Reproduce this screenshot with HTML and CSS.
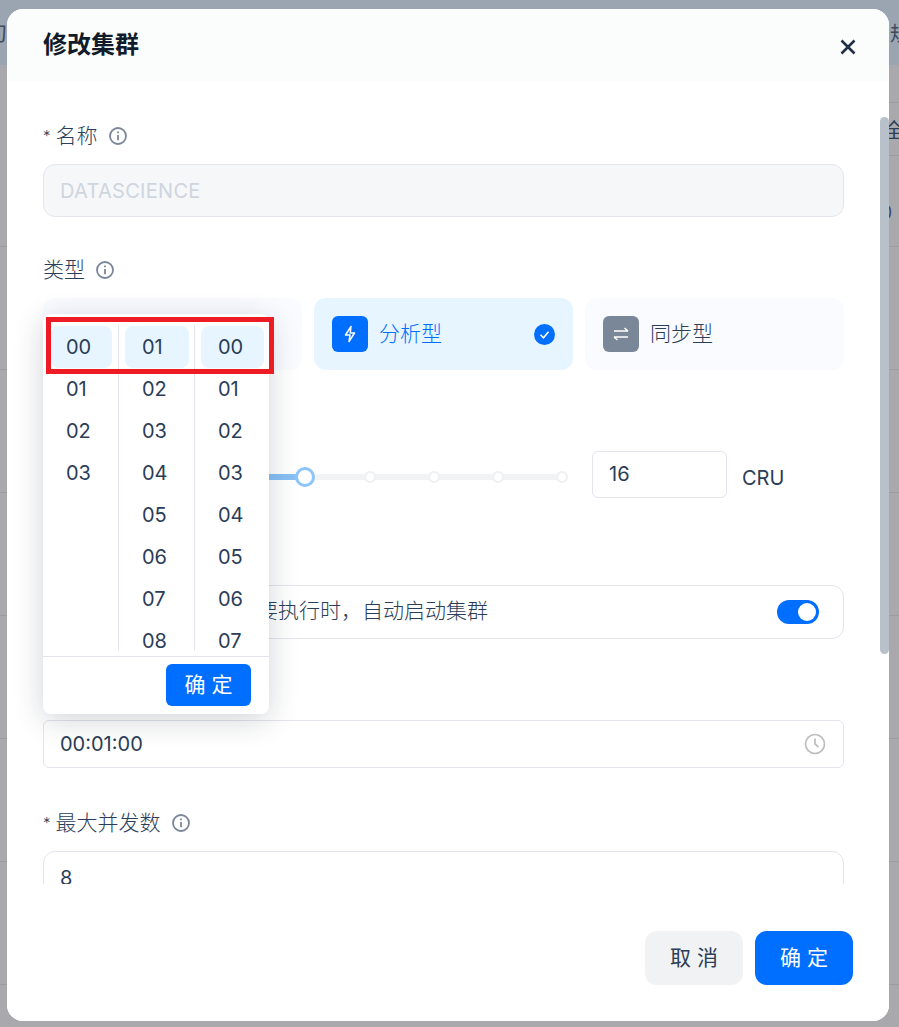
FILE: index.html
```html
<!DOCTYPE html>
<html lang="zh">
<head>
<meta charset="utf-8">
<title>修改集群</title>
<link rel="stylesheet" href="styles.css">
</head>
<body>
<div class="page">
  <div class="backdrop">
    <div class="bd-head"><span class="bd-l">刀</span><span class="bd-r">规</span></div>
    <div class="bd-sub"></div>
    <div class="bd-sub bd-sub2"><span class="bd-r bd-r2">全</span></div>
    <div class="bd-row bd-row-first"><span class="bd-num">0</span></div>
    <div class="bd-row"></div>
    <div class="bd-row"></div>
    <div class="bd-row"></div>
    <div class="bd-row"></div>
    <div class="bd-row"></div>
    <div class="bd-row"></div>
    <div class="bd-row"></div>
  </div>

  <div class="modal">
    <header class="modal-head">
      <h2 class="modal-title">修改集群</h2>
      <svg class="close" viewBox="0 0 16 16" width="16" height="16"><path d="M1.5 1.5l13 13M14.5 1.5l-13 13"/></svg>
    </header>

    <div class="modal-body">
      <div class="field">
        <div class="label"><span class="req">*</span>名称
          <svg class="info" viewBox="0 0 18 18" width="18" height="18"><circle cx="9" cy="9" r="8"/><path d="M9 8v5.2M9 4.6v1.6"/></svg>
        </div>
        <div class="input input-disabled">DATASCIENCE</div>
      </div>

      <div class="field">
        <div class="label">类型
          <svg class="info" viewBox="0 0 18 18" width="18" height="18"><circle cx="9" cy="9" r="8"/><path d="M9 8v5.2M9 4.6v1.6"/></svg>
        </div>
        <div class="cards">
          <div class="card"></div>
          <div class="card card-active">
            <span class="card-icon icon-blue">
              <svg viewBox="0 0 16 18" width="16" height="18"><path d="M9 1.5 3.5 10H8l-1 6.5L12.5 8H8.2z"/></svg>
            </span>
            <span class="card-name">分析型</span>
            <svg class="card-check" viewBox="0 0 21 21" width="21" height="21"><circle cx="10.5" cy="10.5" r="10.5"/><path d="M6.5 10.8l3 3 5-6"/></svg>
          </div>
          <div class="card">
            <span class="card-icon icon-gray">
              <svg viewBox="0 0 18 16" width="18" height="16"><path d="M2 5h14M12.5 2 16 5M16 11H2M5.5 14 2 11"/></svg>
            </span>
            <span class="card-name">同步型</span>
          </div>
        </div>
      </div>

      <div class="field">
        <div class="label"></div>
        <div class="spec-row">
          <div class="slider">
            <div class="track"></div>
            <div class="fill"></div>
            <span class="dot dot-a"></span>
            <span class="dot dot-b"></span>
            <span class="dot dot-c"></span>
            <span class="dot dot-d"></span>
            <span class="thumb"></span>
          </div>
          <div class="input num-input">16</div>
          <span class="unit">CRU</span>
        </div>
      </div>

      <div class="field">
        <div class="label"></div>
        <div class="switch-box">
          <span class="switch-text">当集群停止有任务需要执行时，自动启动集群</span>
          <span class="switch"><span class="knob"></span></span>
        </div>
      </div>

      <div class="field field-time">
        <div class="label"></div>
        <div class="input time-input">
          <span>00:01:00</span>
          <svg class="clock" viewBox="0 0 22 22" width="22" height="22"><circle cx="11" cy="11" r="9.5"/><path d="M11 5.5V11l3.5 3"/></svg>
        </div>
      </div>

      <div class="field">
        <div class="label"><span class="req">*</span>最大并发数
          <svg class="info" viewBox="0 0 18 18" width="18" height="18"><circle cx="9" cy="9" r="8"/><path d="M9 8v5.2M9 4.6v1.6"/></svg>
        </div>
        <div class="input">8</div>
      </div>
    </div>

    <footer class="modal-foot">
      <button class="btn btn-cancel">取 消</button>
      <button class="btn btn-ok">确 定</button>
    </footer>

    <div class="scrollbar"></div>
  </div>

  <div class="picker">
    <div class="picker-cols">
      <ul class="col col-h">
        <li class="on">00</li><li>01</li><li>02</li><li>03</li>
      </ul>
      <ul class="col col-m">
        <li class="on">01</li><li>02</li><li>03</li><li>04</li><li>05</li><li>06</li><li>07</li><li>08</li>
      </ul>
      <ul class="col col-s">
        <li class="on">00</li><li>01</li><li>02</li><li>03</li><li>04</li><li>05</li><li>06</li><li>07</li>
      </ul>
    </div>
    <div class="picker-foot"><button class="picker-ok">确 定</button></div>
  </div>

  <div class="redbox"></div>
</div>
</body>
</html>
```

FILE: styles.css
```css
* { box-sizing: border-box; }
html, body { margin: 0; padding: 0; }
body {
  font-family: Inter, "Noto Sans CJK SC", sans-serif;
  color: #2b3d57;
}
.page {
  position: relative;
  width: 899px;
  height: 1027px;
  overflow: hidden;
  background: #a8a8ad;
}

/* dimmed page behind the dialog */
.backdrop { display: flex; flex-direction: column; color: #3e4a5e; font-size: 20px; }
.bd-head {
  height: 65px;
  flex: none;
  background: #9aa5b1;
  display: flex;
  justify-content: space-between;
  align-items: center;
}
.bd-l { margin-left: -13px; }
.bd-r { margin-right: -11px; }
.bd-r2 { margin-right: -5px; }
.bd-sub {
  height: 38px;
  flex: none;
  margin-left: 100px;
  border-bottom: 1px solid #9b9ba0;
}
.bd-sub2 {
  height: 53px;
  display: flex;
  justify-content: flex-end;
  align-items: center;
  color: #2b3d57;
}
.bd-row { height: 123px; flex: none; border-bottom: 1px solid #9b9ba0; }
.bd-row-first {
  height: 91px;
  display: flex;
  justify-content: flex-end;
  align-items: flex-end;
  padding: 0 7px 22px 0;
}
.bd-num { font-size: 18px; line-height: 22px; }

/* dialog */
.modal {
  position: absolute;
  left: 7px;
  top: 9px;
  width: 882px;
  height: 1012px;
  background: #fff;
  border-radius: 16px;
  display: flex;
  flex-direction: column;
  overflow: hidden;
}
.modal-head {
  height: 72px;
  flex: none;
  background: #fbfdfd;
  display: flex;
  align-items: center;
  justify-content: space-between;
  padding: 0 33px 0 36px;
}
.modal-title { margin: 0; font-size: 24px; line-height: 32px; font-weight: 700; color: #111c2b; }
.close { fill: none; stroke: #1f2f48; stroke-width: 2.6; margin-top: 3px; }

.modal-body {
  flex: 1;
  min-height: 0;
  overflow: hidden;
  padding: 41px 45px 0 36px;
}
.field { margin-bottom: 39px; }
.field-time { margin-bottom: 41px; }
.label {
  height: 28px;
  margin-bottom: 14px;
  display: flex;
  align-items: center;
  font-size: 21px;
  line-height: 26px;
  font-weight: 300;
  color: #2b3d57;
}
.req { font-size: 15px; margin-right: 5px; }
.info { fill: none; stroke: #7a8799; stroke-width: 1.8; margin-left: 11px; }

.input {
  height: 53px;
  border: 1px solid #e3e4ec;
  border-radius: 12px;
  padding: 0 16px;
  display: flex;
  align-items: center;
  font-size: 20px;
  background: #fff;
  color: #2b3d57;
}
.input-disabled { background: #f6f7f9; color: #cfd5df; letter-spacing: 0.3px; }

.cards { display: flex; gap: 12px; }
.card {
  flex: 1;
  height: 72px;
  border-radius: 12px;
  background: #f9fbff;
  display: flex;
  align-items: center;
  padding: 0 18px;
  font-size: 21px;
  line-height: 26px;
  font-weight: 300;
}
.card-active { background: #e6f5ff; color: #006eff; }
.card-icon {
  width: 36px;
  height: 36px;
  border-radius: 6px;
  display: flex;
  align-items: center;
  justify-content: center;
  margin-right: 11px;
}
.icon-blue { background: #006eff; }
.icon-blue svg { fill: none; stroke: #fff; stroke-width: 1.5; stroke-linejoin: round; }
.icon-gray { background: #7a8799; }
.icon-gray svg { fill: none; stroke: #fff; stroke-width: 1.5; }
.card-name { flex: 1; }
.card-check { fill: #006eff; stroke: none; }
.card-check path { fill: none; stroke: #fff; stroke-width: 1.6; }

.spec-row { height: 53px; display: flex; align-items: flex-start; }
.slider { position: relative; width: 525px; height: 47px; margin-right: 24px; }
.track { position: absolute; left: 0; right: 0; top: 23px; height: 6px; background: #f2f3f4; border-radius: 3px; }
.fill { position: absolute; left: 0; width: 263px; top: 23px; height: 6px; background: #87c0f5; border-radius: 3px; }
.dot, .thumb { position: absolute; border-radius: 50%; background: #fff; }
.dot { width: 12px; height: 12px; top: 20px; border: 2px solid #eff0f1; }
.dot-a { left: 321px; }
.dot-b { left: 385px; }
.dot-c { left: 449px; }
.dot-d { left: 513px; }
.thumb { width: 20px; height: 20px; top: 16px; left: 252px; border: 3px solid #8cc5fa; }
.num-input { width: 135px; height: 47px; border-radius: 6px; padding: 0 16px 2px; margin-bottom: 6px; }
.unit { font-size: 20px; margin-left: 15px; line-height: 54px; }

.switch-box {
  height: 54px;
  border: 1px solid #e3e4ec;
  border-radius: 12px;
  display: flex;
  align-items: center;
  justify-content: space-between;
  padding: 0 24px 0 24px;
  font-size: 21px;
  line-height: 26px;
  font-weight: 300;
}
.switch-text { margin-top: -2px; }
.switch {
  width: 42px;
  height: 24px;
  border-radius: 12px;
  background: #006eff;
  position: relative;
}
.knob {
  position: absolute;
  right: 3px;
  top: 3px;
  width: 18px;
  height: 18px;
  border-radius: 50%;
  background: #fff;
}
.time-input { height: 48px; border-radius: 6px; justify-content: space-between; padding-right: 17px; }
.clock { fill: none; stroke: #bdbdbd; stroke-width: 1.7; }

.modal-foot {
  height: 137px;
  flex: none;
  background: #fff;
  display: flex;
  justify-content: flex-end;
  gap: 12px;
  padding: 47px 36px 0 0;
}
.btn {
  width: 98px;
  height: 54px;
  border: 0;
  border-radius: 12px;
  font-family: inherit;
  font-size: 21px;
  line-height: 26px;
  font-weight: 400;
  padding: 0 0 1px;
}
.btn-cancel { background: #f1f2f4; color: #2b3d57; }
.btn-ok { background: #006eff; color: #fff; }

.scrollbar {
  position: absolute;
  right: 0;
  top: 108px;
  width: 9px;
  height: 537px;
  background: #b8c0c9;
  border-radius: 5px;
}

/* time picker popover */
.picker {
  position: absolute;
  left: 43px;
  top: 314px;
  width: 226px;
  height: 400px;
  background: #fff;
  border-radius: 8px;
  box-shadow: 0 6px 30px rgba(30, 40, 60, 0.2);
  display: flex;
  flex-direction: column;
}
.picker-cols { display: flex; height: 336px; padding-top: 12px; overflow: hidden; }
.col {
  list-style: none;
  margin: 0;
  padding: 0;
  height: 324px;
  overflow: hidden;
  font-size: 20px;
}
.col li { height: 42px; line-height: 42px; border-radius: 8px; }
.col li.on { background: #e6f5ff; }
.col-h { width: 75px; padding-left: 8px; padding-right: 6px; }
.col-h li { padding-left: 15px; }
.col-m { width: 76px; border-left: 1px solid #e3e4ec; padding-left: 6px; padding-right: 5px; }
.col-m li { padding-left: 17px; }
.col-s { width: 75px; border-left: 1px solid #e3e4ec; padding-left: 6px; padding-right: 5px; }
.col-s li { padding-left: 17px; }
.picker-foot {
  border-top: 1px solid #e3e4ec;
  margin-top: 6px;
  flex: 1;
  display: flex;
  align-items: flex-start;
  justify-content: flex-end;
  padding: 7px 18px 0 0;
}
.picker-ok {
  width: 85px;
  height: 42px;
  border: 0;
  border-radius: 6px;
  background: #006eff;
  color: #fff;
  font-family: inherit;
  font-size: 21px;
  line-height: 26px;
  font-weight: 400;
  padding: 0 0 1px;
}

/* annotation drawn over the screenshot */
.redbox {
  position: absolute;
  left: 46px;
  top: 317px;
  width: 228px;
  height: 57px;
  border: 5px solid #ed1c24;
}
```
